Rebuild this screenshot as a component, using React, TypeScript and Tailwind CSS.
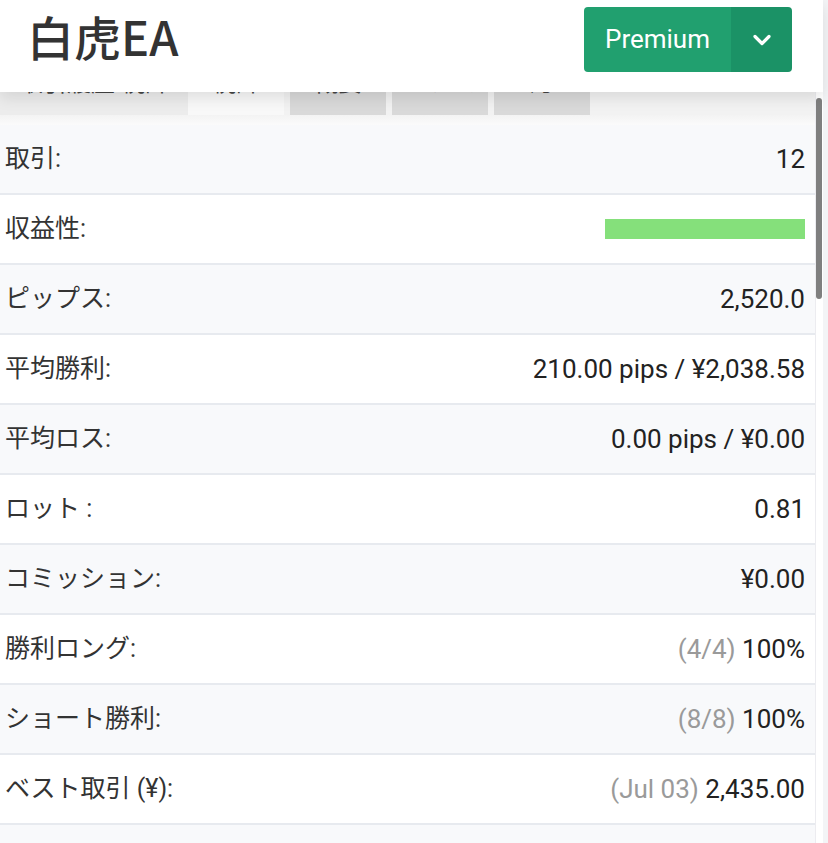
import React from "react";

const rows: { label: string; value: React.ReactNode }[] = [
  { label: "取引:", value: "12" },
  { label: "収益性:", value: <div className="w-[200px] h-[20px] bg-[#85e07b]" /> },
  { label: "ピップス:", value: "2,520.0" },
  { label: "平均勝利:", value: "210.00 pips / ¥2,038.58" },
  { label: "平均ロス:", value: "0.00 pips / ¥0.00" },
  { label: "ロット :", value: "0.81" },
  { label: "コミッション:", value: "¥0.00" },
  {
    label: "勝利ロング:",
    value: (
      <span>
        <span className="text-[#9a9a9a]">(4/4)</span> 100%
      </span>
    ),
  },
  {
    label: "ショート勝利:",
    value: (
      <span>
        <span className="text-[#9a9a9a]">(8/8)</span> 100%
      </span>
    ),
  },
  {
    label: "ベスト取引 (¥):",
    value: (
      <span>
        <span className="text-[#9a9a9a]">(Jul 03)</span> 2,435.00
      </span>
    ),
  },
  { label: "", value: "" },
];

const tabs = [
  { cls: "w-[188px] bg-[#ececec]", text: "取引履歴 統計" },
  { cls: "w-[96px] bg-[#f8f8f8]", text: "統計" },
  { cls: "w-[96px] bg-[#d9d9d9] ml-[6px]", text: "概要" },
  { cls: "w-[96px] bg-[#d9d9d9] ml-[6px]", text: "ピプス" },
  { cls: "w-[96px] bg-[#d9d9d9] ml-[6px]", text: "月" },
];

export default function App() {
  return (
    <div
      className="w-[828px] h-[843px] overflow-hidden bg-white flex text-[#333]"
      style={{ fontFamily: "Roboto, 'Noto Sans CJK JP', sans-serif" }}
    >
      <div className="w-[823px] flex flex-col">
        <header className="relative z-10 h-[92px] shrink-0 bg-white flex items-start justify-between pl-[27px] pr-[31px] shadow-[0_6px_14px_rgba(0,0,0,0.10)]">
          <h1
            className="text-[47px] font-medium leading-none text-[#333] mt-[12px]"
            style={{ fontFamily: "'Noto Sans CJK JP', 'Noto Sans', sans-serif" }}
          >
            白虎EA
          </h1>
          <div className="flex h-[65px] mt-[7px] rounded-[4px] overflow-hidden">
            <div className="w-[147px] bg-[#21a06f] text-white text-[26px] flex items-center justify-center">
              Premium
            </div>
            <div className="w-[61px] bg-[#1b9266] flex items-center justify-center">
              <svg width="20" height="14" viewBox="0 0 20 14" fill="none">
                <path d="M3 3.5 L10 10.5 L17 3.5" stroke="white" strokeWidth="3.2" strokeLinecap="round" strokeLinejoin="round" />
              </svg>
            </div>
          </div>
        </header>
        <div className="flex flex-1 min-h-0">
          <div className="w-[816px] flex flex-col border-r border-[#ececf0]">
            <div className="flex h-[23px] shrink-0 bg-[#f2f2f2]">
              {tabs.map((t, i) => (
                <div key={i} className={`${t.cls} h-[23px] overflow-hidden flex justify-center`}>
                  <span className="text-[24px] leading-none -mt-[21px] text-[#444]">{t.text}</span>
                </div>
              ))}
            </div>
            <div className="h-[10px] shrink-0 bg-gradient-to-b from-[#f3f3f3] to-[#fbfbfb]" />
            {rows.map((r, i) => (
              <div
                key={i}
                className={`h-[70px] shrink-0 flex items-center justify-between pl-[5px] pr-[10px] border-b-2 border-[#e7eaef] text-[26px] ${
                  i % 2 === 0 ? "bg-[#f8f9fb]" : "bg-white"
                }`}
              >
                <span className="text-[25px]">{r.label}</span>
                <span className="text-[#222] flex items-center">{r.value}</span>
              </div>
            ))}
          </div>
          <div className="w-[7px] bg-white relative">
            <div className="absolute left-0 top-[6px] w-[6px] h-[201px] rounded-full bg-[#7f7f7f]" />
          </div>
        </div>
      </div>
      <div className="w-[5px] bg-[#f3f4f6]" />
    </div>
  );
}
